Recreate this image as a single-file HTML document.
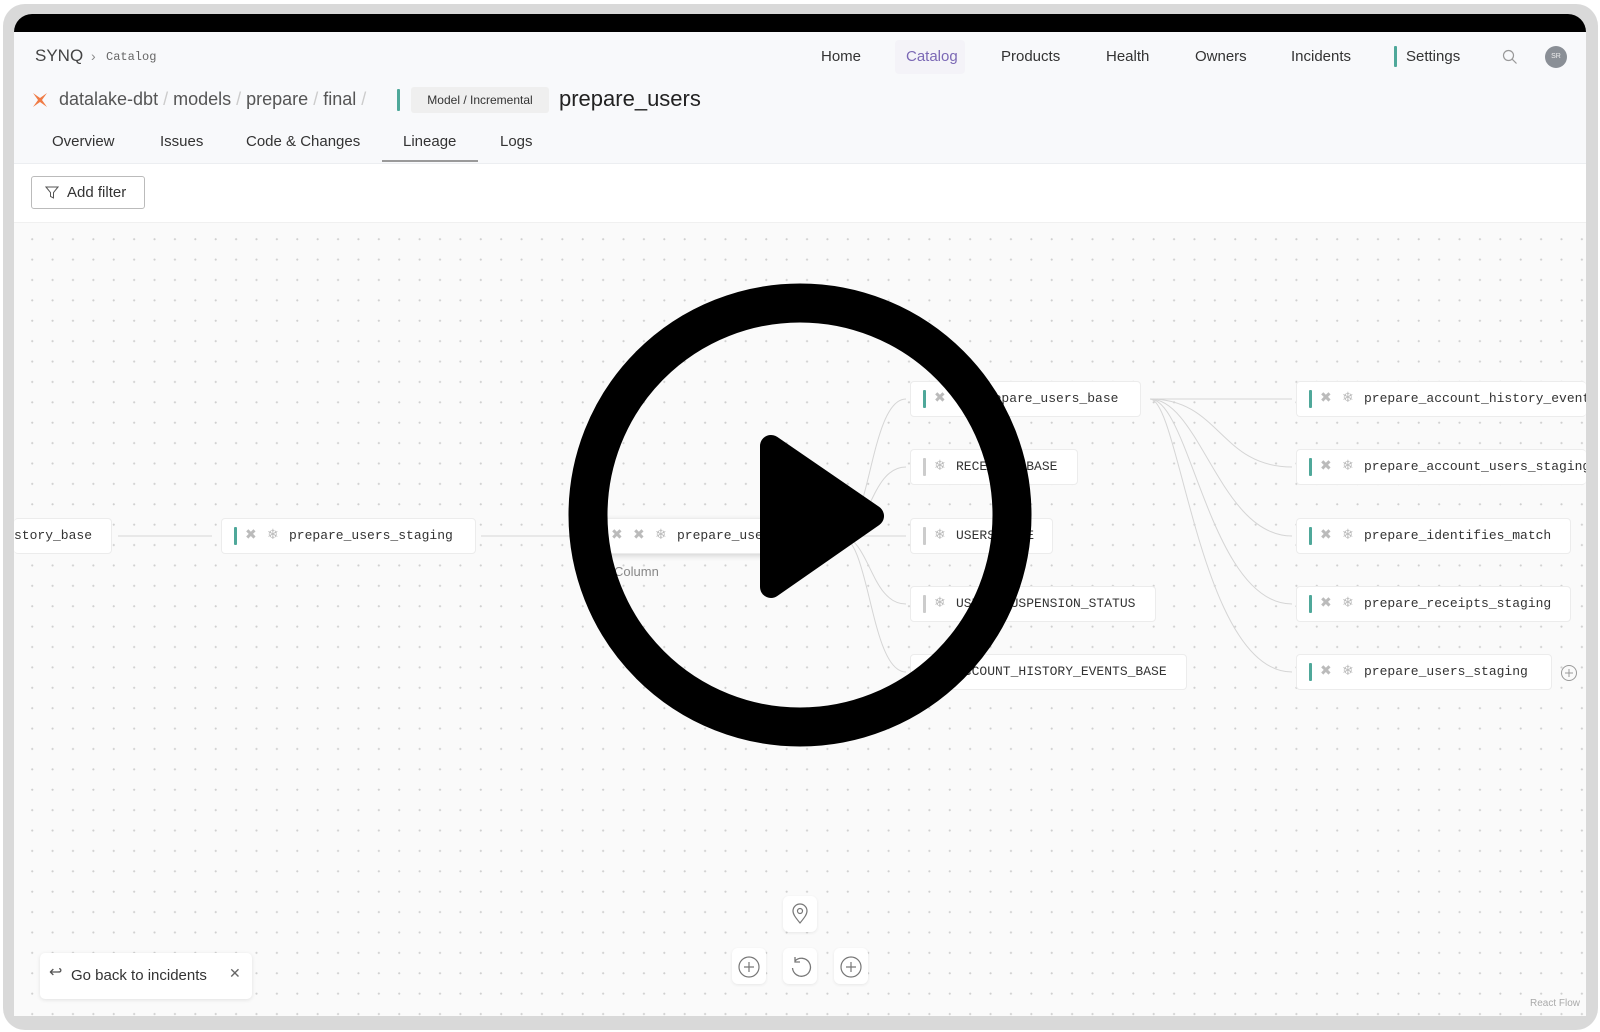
<!DOCTYPE html>
<html><head><meta charset="utf-8"><style>
*{margin:0;padding:0;box-sizing:border-box}
body{width:1600px;height:1032px;background:#fff;font-family:"Liberation Sans",sans-serif;position:relative;overflow:hidden}
.a{position:absolute;white-space:nowrap}
.frame{left:3px;top:4px;width:1595px;height:1026px;background:#d9d9d9;border-radius:22px}
.inner{left:14px;top:14px;width:1572px;height:1002px;background:#f8f9fb;border-radius:18px 18px 0 0;overflow:hidden}
.nav{font-size:15px;color:#333;top:48px}
.tab{font-size:15px;color:#333;top:133px}
.node{position:absolute;background:#fff;border:1px solid #ececec;border-radius:4px;height:36px;font-family:"Liberation Mono",monospace;font-size:13px;color:#333;line-height:34px;padding-left:12px;overflow:hidden;white-space:nowrap}
.bar{display:inline-block;width:3px;height:18px;background:#4fa89a;vertical-align:middle;margin-right:8px;border-radius:1px}
.ic{display:inline-block;width:13px;height:13px;vertical-align:middle;margin-right:9px;color:#bbb;font-size:14px;line-height:13px;font-family:"DejaVu Sans",sans-serif}
.ctl{position:absolute;width:34px;height:36px;background:#fff;border-radius:6px;box-shadow:0 1px 3px rgba(0,0,0,.08)}
</style></head><body>
<div class="a frame"></div>
<div class="a inner">
  <div class="a" style="left:0;top:0;width:1572px;height:18px;background:#000"></div>
  <div class="a" style="left:0;top:149px;width:1572px;height:853px;background:#fff"></div>
  <div class="a" style="left:0;top:149px;width:1572px;height:1px;background:#eceef1"></div>
  <div class="a" style="left:0;top:208px;width:1572px;height:794px;background-color:#fafafa;background-image:radial-gradient(circle,#cfcfcf 0.9px,transparent 1.2px);background-size:20.4px 20.4px;background-position:8px 6px;border-top:1px solid #f0f0f0"></div>
</div>
<!-- top nav -->
<div class="a" style="left:35px;top:46px;font-size:17px;color:#444">SYNQ</div>
<div class="a" style="left:91px;top:48px;font-size:14px;color:#888">›</div>
<div class="a" style="left:106px;top:50px;font-family:'Liberation Mono',monospace;font-size:12px;color:#666">Catalog</div>
<div class="a nav" style="left:821px">Home</div>
<div class="a" style="left:895px;top:40px;width:70px;height:34px;background:#f4f3f8;border-radius:4px"></div>
<div class="a nav" style="left:906px;color:#7b68b5">Catalog</div>
<div class="a nav" style="left:1001px">Products</div>
<div class="a nav" style="left:1106px">Health</div>
<div class="a nav" style="left:1195px">Owners</div>
<div class="a nav" style="left:1291px">Incidents</div>
<div class="a" style="left:1394px;top:46px;width:3px;height:21px;background:#4fa89a;border-radius:1px"></div>
<div class="a nav" style="left:1406px">Settings</div>
<svg class="a" style="left:1502px;top:49px" width="16" height="16" viewBox="0 0 16 16"><circle cx="6.5" cy="6.5" r="5" fill="none" stroke="#999" stroke-width="1.2"/><path d="M10.3 10.3L14.5 14.5" stroke="#999" stroke-width="1.2"/></svg>
<div class="a" style="left:1545px;top:46px;width:22px;height:22px;border-radius:50%;background:#8a8f96;color:#eee;font-size:7px;text-align:center;line-height:22px">SR</div>
<!-- breadcrumb -->
<svg class="a" style="left:31px;top:91px" width="18" height="18" viewBox="0 0 18 18"><path d="M2 2L9 7L16 2L11 9L16 16L9 11L2 16L7 9Z" fill="#f07b45"/></svg>
<div class="a" style="left:59px;top:89px;font-size:18px;color:#555">datalake-dbt <span style="color:#ccc">/</span> models <span style="color:#ccc">/</span> prepare <span style="color:#ccc">/</span> final <span style="color:#ccc">/</span></div>
<div class="a" style="left:397px;top:89px;width:3px;height:22px;background:#4fa89a;border-radius:1px"></div>
<div class="a" style="left:411px;top:87px;width:138px;height:26px;background:#efefef;border-radius:3px;font-size:12px;color:#333;text-align:center;line-height:26px">Model / Incremental</div>
<div class="a" style="left:559px;top:86px;font-size:22px;color:#222">prepare_users</div>
<!-- tabs -->
<div class="a tab" style="left:52px">Overview</div>
<div class="a tab" style="left:160px">Issues</div>
<div class="a tab" style="left:246px">Code &amp; Changes</div>
<div class="a tab" style="left:403px">Lineage</div>
<div class="a tab" style="left:500px">Logs</div>
<div class="a" style="left:382px;top:160px;width:96px;height:2px;background:#9a9a9a"></div>
<!-- add filter -->
<div class="a" style="left:31px;top:176px;width:114px;height:33px;border:1px solid #bbb;border-radius:3px;background:#fff;font-size:15px;color:#333;line-height:31px;padding-left:35px">Add filter</div>
<svg class="a" style="left:45px;top:186px" width="14" height="13" viewBox="0 0 14 13"><path d="M1 1H13L8.5 6.5V12L5.5 10.5V6.5Z" fill="none" stroke="#555" stroke-width="1"/></svg>
<!-- edges -->
<svg class="a" style="left:0;top:0" width="1600" height="1032">
<g fill="none" stroke="#d5d5d5" stroke-width="1">
<path d="M118 536H212"/><path d="M481 536H590"/>
<path d="M840 536C870 536 870 399 906 399"/><path d="M840 536C870 536 870 467 906 467"/><path d="M840 536H906"/><path d="M840 536C870 536 870 604 906 604"/><path d="M840 536C870 536 870 672 906 672"/>
<path d="M1150 399H1292"/>
<path d="M1150 399C1220 399 1220 467 1292 467"/>
<path d="M1150 399C1200 399 1220 536 1292 536"/>
<path d="M1150 399C1190 399 1210 604 1292 604"/>
<path d="M1150 399C1180 399 1200 672 1292 672"/>
</g></svg>
<!-- nodes -->
<div class="node" style="left:14px;top:518px;width:98px;padding-left:0;border-left:none">story_base</div>
<div class="node" style="left:221px;top:518px;width:255px"><span class="bar"></span><span class="ic">✖</span><span class="ic">❄</span>prepare_users_staging</div>
<div class="node" style="left:598px;top:518px;width:200px;box-shadow:0 2px 6px rgba(0,0,0,.15)"><span class="ic">✖</span><span class="ic">✖</span><span class="ic">❄</span>prepare_users</div>
<div class="a" style="left:614px;top:564px;font-size:13px;color:#888">Column</div>
<div class="node" style="left:910px;top:381px;width:231px"><span class="bar"></span><span class="ic">✖</span><span class="ic">❄</span>prepare_users_base</div>
<div class="node" style="left:910px;top:449px;width:168px"><span class="bar" style="background:#ccc"></span><span class="ic">❄</span>RECEIPTS_BASE</div>
<div class="node" style="left:910px;top:518px;width:143px"><span class="bar" style="background:#ccc"></span><span class="ic">❄</span>USERS_BASE</div>
<div class="node" style="left:910px;top:586px;width:246px"><span class="bar" style="background:#ccc"></span><span class="ic">❄</span>USERS_SUSPENSION_STATUS</div>
<div class="node" style="left:910px;top:654px;width:277px"><span class="bar" style="background:#ccc"></span><span class="ic">❄</span>ACCOUNT_HISTORY_EVENTS_BASE</div>
<div class="node" style="left:1296px;top:381px;width:290px;border-right:none"><span class="bar"></span><span class="ic">✖</span><span class="ic">❄</span>prepare_account_history_events</div>
<div class="node" style="left:1296px;top:449px;width:290px;border-right:none"><span class="bar"></span><span class="ic">✖</span><span class="ic">❄</span>prepare_account_users_staging</div>
<div class="node" style="left:1296px;top:518px;width:275px"><span class="bar"></span><span class="ic">✖</span><span class="ic">❄</span>prepare_identifies_match</div>
<div class="node" style="left:1296px;top:586px;width:275px"><span class="bar"></span><span class="ic">✖</span><span class="ic">❄</span>prepare_receipts_staging</div>
<div class="node" style="left:1296px;top:654px;width:256px"><span class="bar"></span><span class="ic">✖</span><span class="ic">❄</span>prepare_users_staging</div>
<svg class="a" style="left:1560px;top:664px" width="18" height="18"><circle cx="9" cy="9" r="7.5" fill="none" stroke="#999"/><path d="M9 5V13M5 9H13" stroke="#999"/></svg>
<!-- controls -->
<div class="ctl" style="left:783px;top:896px"></div>
<svg class="a" style="left:790px;top:903px" width="20" height="22" viewBox="0 0 20 22"><path d="M10 20C5 14 3 11 3 8A7 7 0 0 1 17 8C17 11 15 14 10 20Z" fill="none" stroke="#777" stroke-width="1.2"/><circle cx="10" cy="8" r="2.5" fill="none" stroke="#777" stroke-width="1.2"/></svg>
<div class="ctl" style="left:732px;top:948px"></div>
<div class="ctl" style="left:783px;top:948px"></div>
<div class="ctl" style="left:834px;top:948px"></div>
<svg class="a" style="left:737px;top:955px" width="24" height="24"><circle cx="12" cy="12" r="10" fill="none" stroke="#777" stroke-width="1.2"/><path d="M12 7V17M7 12H17" stroke="#777" stroke-width="1.2"/></svg>
<svg class="a" style="left:839px;top:955px" width="24" height="24"><circle cx="12" cy="12" r="10" fill="none" stroke="#777" stroke-width="1.2"/><path d="M12 7V17M7 12H17" stroke="#777" stroke-width="1.2"/></svg>
<svg class="a" style="left:788px;top:955px" width="24" height="24"><path d="M7 6A9 9 0 1 1 4.5 13" fill="none" stroke="#777" stroke-width="1.3"/><path d="M7 2V7H12" fill="none" stroke="#777" stroke-width="1.3"/></svg>
<div class="a" style="left:40px;top:953px;width:212px;height:46px;background:#fff;border-radius:5px;box-shadow:0 1px 4px rgba(0,0,0,.1);font-size:15px;color:#333;line-height:46px;padding-left:31px">Go back to incidents</div>
<div class="a" style="left:49px;top:962px;font-size:16px;color:#555">↩</div>
<div class="a" style="left:229px;top:965px;font-size:14px;color:#666">✕</div>
<div class="a" style="left:1530px;top:998px;font-size:10px;color:#aaa">React Flow</div>
<!-- play overlay -->
<svg class="a" style="left:0;top:0" width="1600" height="1032">
<circle cx="800" cy="515" r="212" fill="none" stroke="#000" stroke-width="39"/>
<path d="M771 446L771 587L873 516Z" fill="#000" stroke="#000" stroke-width="22" stroke-linejoin="round"/>
</svg>
</body></html>
